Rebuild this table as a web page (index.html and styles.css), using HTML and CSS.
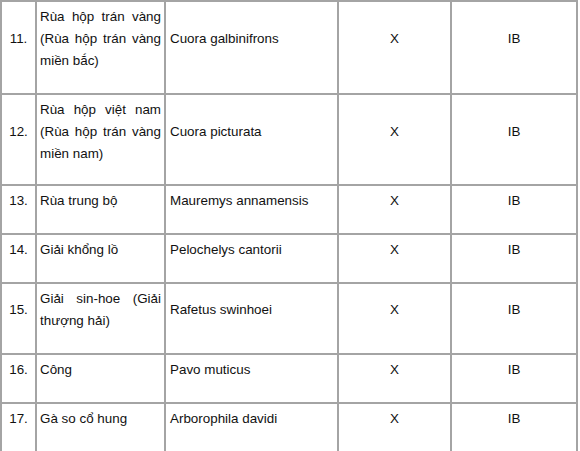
FILE: index.html
```html
<!DOCTYPE html>
<html lang="vi">
<head>
<meta charset="utf-8">
<title>Danh mục loài</title>
<link rel="stylesheet" href="styles.css">
</head>
<body>
<table class="species">
  <colgroup>
    <col class="c-no">
    <col class="c-vn">
    <col class="c-sci">
    <col class="c-x">
    <col class="c-grp">
  </colgroup>
  <tbody>
    <tr>
      <td class="no">11.</td>
      <td class="vn">Rùa hộp trán vàng (Rùa hộp trán vàng miền bắc)</td>
      <td class="sci">Cuora galbinifrons</td>
      <td class="mid">X</td>
      <td class="mid">IB</td>
    </tr>
    <tr class="tight">
      <td class="no">12.</td>
      <td class="vn">Rùa hộp việt nam (Rùa hộp trán vàng miền nam)</td>
      <td class="sci">Cuora picturata</td>
      <td class="mid">X</td>
      <td class="mid">IB</td>
    </tr>
    <tr>
      <td class="no">13.</td>
      <td class="vn">Rùa trung bộ</td>
      <td class="sci">Mauremys annamensis</td>
      <td class="mid">X</td>
      <td class="mid">IB</td>
    </tr>
    <tr>
      <td class="no">14.</td>
      <td class="vn">Giải khổng lồ</td>
      <td class="sci">Pelochelys cantorii</td>
      <td class="mid">X</td>
      <td class="mid">IB</td>
    </tr>
    <tr>
      <td class="no">15.</td>
      <td class="vn">Giải sin-hoe (Giải thượng hải)</td>
      <td class="sci">Rafetus swinhoei</td>
      <td class="mid">X</td>
      <td class="mid">IB</td>
    </tr>
    <tr>
      <td class="no">16.</td>
      <td class="vn">Công</td>
      <td class="sci">Pavo muticus</td>
      <td class="mid">X</td>
      <td class="mid">IB</td>
    </tr>
    <tr>
      <td class="no">17.</td>
      <td class="vn">Gà so cổ hung</td>
      <td class="sci">Arborophila davidi</td>
      <td class="mid">X</td>
      <td class="mid">IB</td>
    </tr>
  </tbody>
</table>
</body>
</html>
```
FILE: styles.css
```css
html, body {
  margin: 0;
  padding: 0;
  background: #ffffff;
}

body {
  font-family: "Liberation Sans", Arial, sans-serif;
  font-size: 13.4px;
  color: #111111;
}

.species {
  border-collapse: collapse;
  table-layout: fixed;
  width: 578px;
}

.c-no { width: 35px; }
.c-vn { width: 129px; }
.c-sci { width: 173px; }
.c-x { width: 113px; }
.c-grp { width: 126px; }

.species td {
  border: 2px solid #a4a4a4;
  padding: 4px 4px 21px 4px;
  line-height: 22px;
  vertical-align: middle;
}

.species tr.tight td {
  padding-bottom: 19px;
}

.species td.no {
  text-align: center;
  padding-left: 2px;
  padding-right: 2px;
}

.species td.vn {
  text-align: justify;
  padding-left: 3px;
  padding-right: 3px;
}

.species td.sci {
  text-align: left;
}

.species td.mid {
  text-align: center;
}
```
